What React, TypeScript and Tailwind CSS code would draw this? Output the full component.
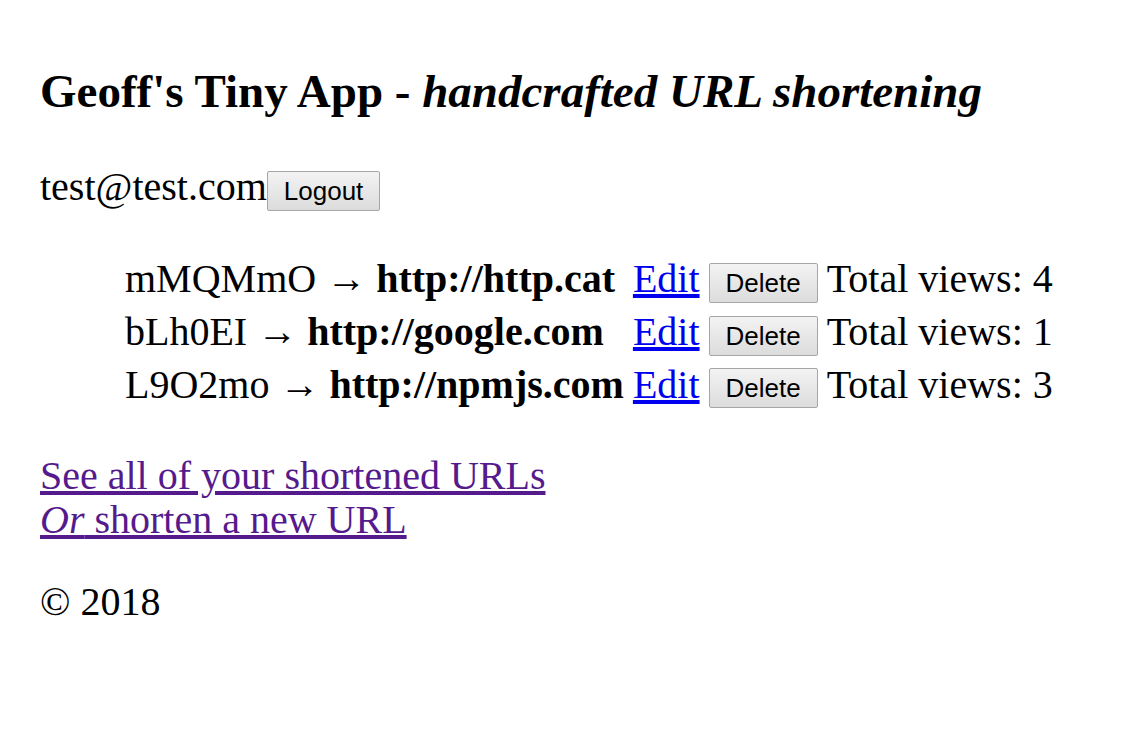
const urls = [
  { id: "mMQMmO", long: "http://http.cat", views: 4 },
  { id: "bLh0EI", long: "http://google.com", views: 1 },
  { id: "L9O2mo", long: "http://npmjs.com", views: 3 },
]

function Btn({ children, mid }: { children: React.ReactNode; mid?: boolean }) {
  return (
    <button
      type="button"
      className={`font-['Liberation_Sans',Arial,sans-serif] text-[26px] leading-[30px] text-black px-[16px] py-[4px] border border-[#a6a6a6] rounded-[2px] bg-gradient-to-b from-[#f3f3f3] to-[#dcdcdc] ${mid ? "align-middle" : "align-baseline"}`}
    >
      {children}
    </button>
  )
}

export default function App() {
  return (
    <div className="min-h-[740px] bg-white text-black font-['Liberation_Serif','Times_New_Roman',serif] text-[40px] leading-[46px] px-[40px] pt-[64px]">
      {/* ── Header ── */}
      <h3 className="text-[47px] leading-[54px] font-bold">
        Geoff's Tiny App - <i>handcrafted URL shortening</i>
      </h3>

      <div className="mt-[46px]">
        test@test.com<Btn>Logout</Btn>
      </div>

      {/* ── URL table ── */}
      <table className="ml-[78px] mt-[39px] border-separate border-spacing-x-[5px] border-spacing-y-[6px]">
        <tbody>
          {urls.map((u) => (
            <tr key={u.id}>
              <td className="px-[2px] py-0 align-middle">
                {u.id} → <b>{u.long}</b>
              </td>
              <td className="px-[2px] py-0 align-middle">
                <a href="#" className="text-[#0000ee] underline">Edit</a>
              </td>
              <td className="px-[2px] py-0 align-middle">
                <Btn mid>Delete</Btn>
              </td>
              <td className="px-[2px] py-0 align-middle">Total views: {u.views}</td>
            </tr>
          ))}
        </tbody>
      </table>

      <div className="mt-[40px] leading-[44px]">
        <a href="#" className="text-[#551a8b] underline">See all of your shortened URLs</a>
        <br />
        <a href="#" className="text-[#551a8b] underline"><i>Or</i> shorten a new URL</a>
      </div>

      <p className="mt-[38px] leading-[44px]">© 2018</p>
    </div>
  )
}
